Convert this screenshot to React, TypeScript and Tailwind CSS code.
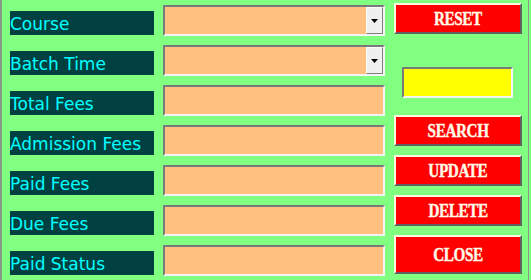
import React from 'react';

const fields = [
    { label: 'Course', combo: true },
    { label: 'Batch Time', combo: true },
    { label: 'Total Fees', combo: false },
    { label: 'Admission Fees', combo: false },
    { label: 'Paid Fees', combo: false },
    { label: 'Due Fees', combo: false },
    { label: 'Paid Status', combo: false },
];

const FieldRow = ({ label, combo }: { label: string; combo: boolean }) => (
    <div className="h-[40px] flex items-end gap-[9px] pb-[5px]">
        <div className="w-[144px] h-[24px] bg-[#004040] text-[#00ffff] text-[17px] leading-[26px] whitespace-nowrap overflow-hidden font-['Comic_Sans_MS','DejaVu_Sans',sans-serif]">
            {label}
        </div>
        <div className="w-[222px] h-[31px] mb-[-1px] flex justify-end items-start bg-[#ffc080] border-2 border-t-[#7a7a7a] border-l-[#7a7a7a] border-b-[#f4f4f4] border-r-[#f4f4f4]">
            {combo && (
                <div className="w-[17px] h-[27px] flex items-center justify-center bg-[#f0f0f0] border border-t-[#ffffff] border-l-[#ffffff] border-b-[#808080] border-r-[#808080]">
                    <svg width="7" height="4" viewBox="0 0 7 4">
                        <path d="M0 0 H7 L3.5 4 Z" fill="#000" />
                    </svg>
                </div>
            )}
        </div>
    </div>
);

const ActionButton = ({ label, tall }: { label: string; tall?: boolean }) => (
    <button
        className={
            'w-[128px] flex items-center justify-center pt-[2px] bg-[#ff0000] text-[#fffbe8] text-[19px] font-bold font-["Liberation_Serif",serif] border-2 border-t-[#fff8dc] border-l-[#fff8dc] border-b-[#606060] border-r-[#606060] ' +
            (tall ? 'h-[39px]' : 'h-[31px]')
        }
    >
        <span className="inline-block scale-x-[0.8] tracking-[-0.5px] [-webkit-text-stroke:0.4px_#fffbe8]">{label}</span>
    </button>
);

export default function App() {
    return (
        <div className="w-[531px] h-[280px] bg-[#80ff80] flex overflow-hidden">
            <div className="w-[529px] h-full flex border-l-2 border-r border-[#8a9a8a]">
                <div className="flex flex-col pl-[8px]">
                    {fields.map((f) => (
                        <FieldRow key={f.label} label={f.label} combo={f.combo} />
                    ))}
                </div>

                <div className="flex flex-col items-start pl-[9px] pt-[3px]">
                    <ActionButton label="RESET" />
                    <div className="mt-[33px] ml-[8px] w-[111px] h-[31px] bg-[#ffff00] border-2 border-t-[#7a7a7a] border-l-[#7a7a7a] border-b-[#f4f4f4] border-r-[#f4f4f4]" />
                    <div className="mt-[17px] flex flex-col gap-[9px]">
                        <ActionButton label="SEARCH" />
                        <ActionButton label="UPDATE" />
                        <ActionButton label="DELETE" />
                        <ActionButton label="CLOSE" tall />
                    </div>
                </div>
            </div>
        </div>
    );
}
